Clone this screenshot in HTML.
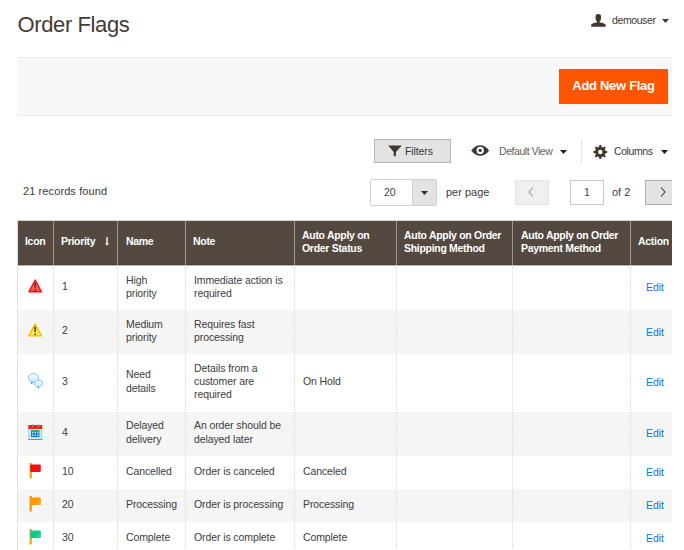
<!DOCTYPE html>
<html><head><meta charset="utf-8">
<style>
*{box-sizing:border-box;margin:0;padding:0}
html,body{width:684px;height:550px;overflow:hidden;background:#fff}
body{font-family:"Liberation Sans",sans-serif;color:#303030;position:relative}
.a{position:absolute;white-space:nowrap}
.t{font-size:10.5px;line-height:13px;color:#3c3c3c;letter-spacing:-0.1px}
.title{left:17.6px;top:10.5px;font-size:22px;line-height:28px;color:#463b34;letter-spacing:-0.4px}
.user{left:612px;top:13px;font-size:10.5px;line-height:14px;color:#41362f;letter-spacing:-0.4px}
.panel{left:17px;top:57px;width:655px;height:59px;background:#f8f8f8;border-top:1px solid #ececec;border-bottom:1px solid #ececec}
.btn{left:559px;top:69px;width:109px;height:35px;background:#ff5500;color:#fff;font-weight:bold;font-size:13px;line-height:34px;text-align:center;letter-spacing:-0.3px}
.filters{left:374px;top:139px;width:77px;height:24px;background:#e3e3e3;border:1px solid #b5b5b5}
.hdr{left:18px;top:221px;width:654px;height:44px;background:#534940;border-bottom:1px solid #4b4038}
.hdiv{position:absolute;top:0;width:1px;height:44px;background:#9d9590}
.hd{position:absolute;color:#fff;font-weight:bold;font-size:10.5px;line-height:13px;letter-spacing:-0.3px}
.row{position:absolute;left:17px;width:655px}
.g{background:#f5f5f5}
.vd{position:absolute;top:265px;height:285px;width:1px;background:repeating-linear-gradient(to bottom,#e0e0e0 0,#e0e0e0 2px,transparent 2px,transparent 3px)}
.edit{color:#007bdb}
</style></head><body>
<div class="a title">Order Flags</div>
<svg class="a" style="left:590px;top:13px" width="17" height="15" viewBox="0 0 17 15"><path d="M5.6 3.3 C5.6 1.7 6.8 1 8.3 1 C9.8 1 11 1.7 11 3.3 L11 5.6 C11 7 10.3 8 9.6 8.6 L9.6 9.2 C11.5 9.8 14.3 10.2 15.6 11.4 L15.6 13.8 L1.2 13.8 L1.2 11.4 C2.5 10.2 5.2 9.8 7.1 9.2 L7.1 8.6 C6.3 8 5.6 7 5.6 5.6 Z" fill="#41362f"/></svg>
<div class="a user">demouser</div>
<svg class="a" style="left:662px;top:19px" width="8" height="5"><path d="M0 0 L7 0 L3.5 4 Z" fill="#41362f"/></svg>

<div class="a panel"></div>
<div class="a btn">Add New Flag</div>

<div class="a filters"></div>
<svg class="a" style="left:388px;top:145px" width="15" height="12" viewBox="0 0 15 12"><path d="M0.2 0.5 L13.8 0.5 L7.9 7 L7.9 11.3 L5.7 11.3 L5.7 7 Z" fill="#41362f"/></svg>
<div class="a t" style="left:405px;top:145px;color:#41362f;letter-spacing:-0.1px">Filters</div>

<svg class="a" style="left:471px;top:145px" width="19" height="11" viewBox="0 0 19 11"><path d="M0.2 5.5 C3 1.8 6 0.2 9.2 0.2 C12.4 0.2 15.4 1.8 18.2 5.5 C15.4 9.2 12.4 10.8 9.2 10.8 C6 10.8 3 9.2 0.2 5.5 Z" fill="#41362f"/><circle cx="9.2" cy="5.4" r="3.6" fill="#fff"/><circle cx="9.2" cy="5.4" r="1.7" fill="#41362f"/></svg>
<div class="a t" style="left:499px;top:145px;color:#675f59;letter-spacing:-0.45px">Default View</div>
<svg class="a" style="left:560px;top:150px" width="8" height="5"><path d="M0 0 L7 0 L3.5 4 Z" fill="#1e1e1e"/></svg>
<div class="a" style="left:581px;top:139px;width:1px;height:24px;background:#e3e3e3"></div>
<svg class="a" style="left:593px;top:145px" width="15" height="14" viewBox="0 0 15 14"><g fill="#41362f" transform="translate(7.3 7)"><circle r="5"/><path d="M-1.7 -4 L-0.8 -6.9 L0.8 -6.9 L1.7 -4 Z" transform="rotate(0)"/><path d="M-1.7 -4 L-0.8 -6.9 L0.8 -6.9 L1.7 -4 Z" transform="rotate(45)"/><path d="M-1.7 -4 L-0.8 -6.9 L0.8 -6.9 L1.7 -4 Z" transform="rotate(90)"/><path d="M-1.7 -4 L-0.8 -6.9 L0.8 -6.9 L1.7 -4 Z" transform="rotate(135)"/><path d="M-1.7 -4 L-0.8 -6.9 L0.8 -6.9 L1.7 -4 Z" transform="rotate(180)"/><path d="M-1.7 -4 L-0.8 -6.9 L0.8 -6.9 L1.7 -4 Z" transform="rotate(225)"/><path d="M-1.7 -4 L-0.8 -6.9 L0.8 -6.9 L1.7 -4 Z" transform="rotate(270)"/><path d="M-1.7 -4 L-0.8 -6.9 L0.8 -6.9 L1.7 -4 Z" transform="rotate(315)"/></g><circle cx="7.3" cy="7" r="2.2" fill="#fff"/></svg>
<div class="a t" style="left:614px;top:145px;color:#41362f;letter-spacing:-0.4px">Columns</div>
<svg class="a" style="left:660.5px;top:150px" width="8" height="5"><path d="M0 0 L7 0 L3.5 4 Z" fill="#1e1e1e"/></svg>

<div class="a t" style="left:23px;top:185px;color:#3c3c3c;font-size:11px;letter-spacing:0.1px">21 records found</div>

<div class="a" style="left:370px;top:179px;width:67px;height:27px;border:1px solid #d0d0d0;border-radius:2px;background:#fff"></div>
<div class="a" style="left:412px;top:180px;width:24px;height:25px;background:#e3e3e3;border-left:1px solid #cfcfcf;border-radius:0 1px 1px 0"></div>
<div class="a t" style="left:384px;top:186px">20</div>
<svg class="a" style="left:421px;top:191px" width="8" height="5"><path d="M0 0 L7 0 L3.5 4 Z" fill="#303030"/></svg>
<div class="a t" style="left:446px;top:186px;font-size:11px;letter-spacing:0">per page</div>

<div class="a" style="left:515px;top:180px;width:34px;height:25px;background:#f0f0f0;border:1px solid #e3e3e3"></div>
<svg class="a" style="left:527px;top:187px" width="8" height="10"><path d="M6 0.5 L2 5 L6 9.5" stroke="#b5b5b5" stroke-width="1.3" fill="none"/></svg>
<div class="a" style="left:570px;top:180px;width:34px;height:25px;background:#fff;border:1px solid #c8c8c8"></div>
<div class="a t" style="left:584px;top:186px">1</div>
<div class="a t" style="left:612px;top:186px;font-size:11px;letter-spacing:0">of 2</div>
<div class="a" style="left:645px;top:180px;width:27px;height:25px;background:#e3e3e3;border:1px solid #adadad;border-right:none"></div>
<svg class="a" style="left:659px;top:187px" width="8" height="10"><path d="M2 0.5 L6 5 L2 9.5" stroke="#41362f" stroke-width="1.1" fill="none"/></svg>

<!-- table -->
<div class="row g" style="top:310px;height:44px"></div>
<div class="row g" style="top:412px;height:44px"></div>
<div class="row g" style="top:489px;height:33px"></div>
<div class="a" style="left:17px;top:220px;width:1px;height:330px;background:#e0e0e0"></div>
<div class="vd" style="left:53px"></div>
<div class="vd" style="left:117px"></div>
<div class="vd" style="left:185px"></div>
<div class="vd" style="left:294px"></div>
<div class="vd" style="left:396px"></div>
<div class="vd" style="left:512px"></div>
<div class="vd" style="left:630px"></div>

<div class="a" style="left:18px;top:220px;width:654px;height:1px;background:#d9d5d2"></div>
<div class="a" style="left:18px;top:265px;width:654px;height:1px;background:#bdb8b4"></div>
<div class="a hdr">
  <div class="hdiv" style="left:35px"></div>
  <div class="hdiv" style="left:99px"></div>
  <div class="hdiv" style="left:167px"></div>
  <div class="hdiv" style="left:276px"></div>
  <div class="hdiv" style="left:378px"></div>
  <div class="hdiv" style="left:494px"></div>
  <div class="hdiv" style="left:612px"></div>
  <div class="hd" style="left:7px;top:14px">Icon</div>
  <div class="hd" style="left:43px;top:14px">Priority</div>
  <svg style="position:absolute;left:87px;top:16px" width="5" height="10" viewBox="0 0 5 10"><rect x="1.3" y="0" width="1.5" height="7.5" fill="#f4f1ee"/><path d="M0.1 6.2 L4 6.2 L2.05 8.8 Z" fill="#f4f1ee"/></svg>
  <div class="hd" style="left:108px;top:14px">Name</div>
  <div class="hd" style="left:175px;top:14px">Note</div>
  <div class="hd" style="left:284px;top:8px">Auto Apply on<br>Order Status</div>
  <div class="hd" style="left:386px;top:8px">Auto Apply on Order<br>Shipping Method</div>
  <div class="hd" style="left:503px;top:8px">Auto Apply on Order<br>Payment Method</div>
  <div class="hd" style="left:620px;top:14px">Action</div>
</div>

<!-- rows text -->
<div class="a t" style="left:62px;top:280px">1</div>
<div class="a t" style="left:126px;top:274px">High<br>priority</div>
<div class="a t" style="left:194px;top:274px">Immediate action is<br>required</div>
<div class="a t edit" style="left:646px;top:281px">Edit</div>

<div class="a t" style="left:62px;top:324px">2</div>
<div class="a t" style="left:126px;top:318px">Medium<br>priority</div>
<div class="a t" style="left:194px;top:318px">Requires fast<br>processing</div>
<div class="a t edit" style="left:646px;top:326px">Edit</div>

<div class="a t" style="left:62px;top:375px">3</div>
<div class="a t" style="left:126px;top:367px;line-height:14px">Need<br>details</div>
<div class="a t" style="left:194px;top:362px">Details from a<br>customer are<br>required</div>
<div class="a t" style="left:303px;top:375px">On Hold</div>
<div class="a t edit" style="left:646px;top:376px">Edit</div>

<div class="a t" style="left:62px;top:426px">4</div>
<div class="a t" style="left:126px;top:418px;line-height:14px">Delayed<br>delivery</div>
<div class="a t" style="left:194px;top:418px;line-height:14px">An order should be<br>delayed later</div>
<div class="a t edit" style="left:646px;top:427px">Edit</div>

<div class="a t" style="left:62px;top:465px">10</div>
<div class="a t" style="left:126px;top:465px">Cancelled</div>
<div class="a t" style="left:194px;top:465px">Order is canceled</div>
<div class="a t" style="left:303px;top:465px">Canceled</div>
<div class="a t edit" style="left:646px;top:466px">Edit</div>

<div class="a t" style="left:62px;top:498px">20</div>
<div class="a t" style="left:126px;top:498px">Processing</div>
<div class="a t" style="left:194px;top:498px">Order is processing</div>
<div class="a t" style="left:303px;top:498px">Processing</div>
<div class="a t edit" style="left:646px;top:499px">Edit</div>

<div class="a t" style="left:62px;top:531px">30</div>
<div class="a t" style="left:126px;top:531px">Complete</div>
<div class="a t" style="left:194px;top:531px">Order is complete</div>
<div class="a t" style="left:303px;top:531px">Complete</div>
<div class="a t edit" style="left:646px;top:532px">Edit</div>

<!-- row icons -->
<svg class="a" style="left:27px;top:278px" width="17" height="16" viewBox="0 0 17 16"><defs><linearGradient id="rg" x1="0" y1="0" x2="0" y2="1"><stop offset="0" stop-color="#ff7a7a"/><stop offset="1" stop-color="#ff4a4a"/></linearGradient></defs><path d="M8.2 2 L14.5 13.8 L1.9 13.8 Z" fill="url(#rg)" stroke="#ff1010" stroke-width="1.4" stroke-linejoin="round"/><path d="M7.45 4.8 L8.95 4.8 L8.65 10.2 L7.75 10.2 Z" fill="#1e1e1e"/><rect x="7.5" y="11.5" width="1.4" height="1.4" fill="#1e1e1e"/></svg>
<svg class="a" style="left:27px;top:322px" width="17" height="16" viewBox="0 0 17 16"><defs><linearGradient id="yg" x1="0" y1="0" x2="0" y2="1"><stop offset="0" stop-color="#ffd400"/><stop offset="1" stop-color="#ffe97a"/></linearGradient></defs><path d="M8.1 2.1 L14.5 13.9 L1.8 13.9 Z" fill="url(#yg)" stroke="#eec000" stroke-width="1.4" stroke-linejoin="round"/><path d="M7.35 4.8 L8.85 4.8 L8.55 10.3 L7.65 10.3 Z" fill="#1a1a1a"/><rect x="7.4" y="11.6" width="1.4" height="1.4" fill="#1a1a1a"/></svg>
<svg class="a" style="left:27px;top:372px" width="17" height="18" viewBox="0 0 17 18"><defs><linearGradient id="bg1" x1="0" y1="0" x2="0" y2="1"><stop offset="0" stop-color="#f4fbff"/><stop offset="1" stop-color="#cfe9f9"/></linearGradient></defs><path d="M10 14 L11.6 17 L12.6 14.2 Z" fill="#3f86cf"/><ellipse cx="11.4" cy="11.3" rx="4.3" ry="3.3" fill="url(#bg1)" stroke="#74c4f2" stroke-width="0.9"/><path d="M3.2 8.2 L4.6 12.4 L6.6 9.6 Z" fill="#3f86cf"/><ellipse cx="6.4" cy="5.8" rx="5.3" ry="4.4" fill="url(#bg1)" stroke="#74c4f2" stroke-width="0.9"/></svg>
<svg class="a" style="left:28px;top:423px" width="15" height="17" viewBox="0 0 15 17"><rect x="0.3" y="2" width="13.9" height="4" fill="#ff1a1a"/><rect x="0.3" y="6" width="13.9" height="10.3" fill="#d3eefa"/><rect x="0.3" y="6" width="1" height="10.3" fill="#8fd0f0"/><rect x="13.2" y="6" width="1" height="10.3" fill="#8fd0f0"/><rect x="0.3" y="16" width="13.9" height="1" fill="#e86060"/><rect x="3" y="7" width="8.5" height="1.2" fill="#2cb36b"/><rect x="3" y="8.2" width="8.5" height="6" fill="#1a7ec2"/><g fill="#d8efff"><rect x="4" y="9" width="1.3" height="1.3"/><rect x="6.6" y="9" width="1.3" height="1.3"/><rect x="9.2" y="9" width="1.3" height="1.3"/><rect x="4" y="11.6" width="1.3" height="1.3"/><rect x="6.6" y="11.6" width="1.3" height="1.3"/><rect x="9.2" y="11.6" width="1.3" height="1.3"/></g><rect x="4" y="0.8" width="1" height="3" fill="#9ab"/><rect x="10" y="0.8" width="1" height="3" fill="#9ab"/></svg>
<svg class="a" style="left:29px;top:463px" width="13" height="16" viewBox="0 0 13 16"><rect x="0.6" y="0" width="2.2" height="15.6" rx="0.6" fill="#e8a317"/><rect x="1.2" y="1.6" width="10.6" height="7.4" rx="1" fill="#f01010"/></svg>
<svg class="a" style="left:29px;top:496px" width="13" height="16" viewBox="0 0 13 16"><rect x="0.6" y="0" width="2.2" height="15.6" rx="0.6" fill="#f39200"/><rect x="1.2" y="1.6" width="10.6" height="7.4" rx="1" fill="#ff9c00"/><path d="M6 9 L11.8 3 L11.8 9 Z" fill="#ffa82a" opacity="0.7"/></svg>
<svg class="a" style="left:29px;top:529px" width="13" height="16" viewBox="0 0 13 16"><rect x="0.6" y="0" width="2.2" height="15.6" rx="0.6" fill="#e8a317"/><rect x="1.2" y="1.6" width="10.6" height="7.4" rx="1" fill="#10c98a"/><path d="M6 9 L11.8 3 L11.8 9 Z" fill="#2adb9a" opacity="0.6"/></svg>
</body></html>
